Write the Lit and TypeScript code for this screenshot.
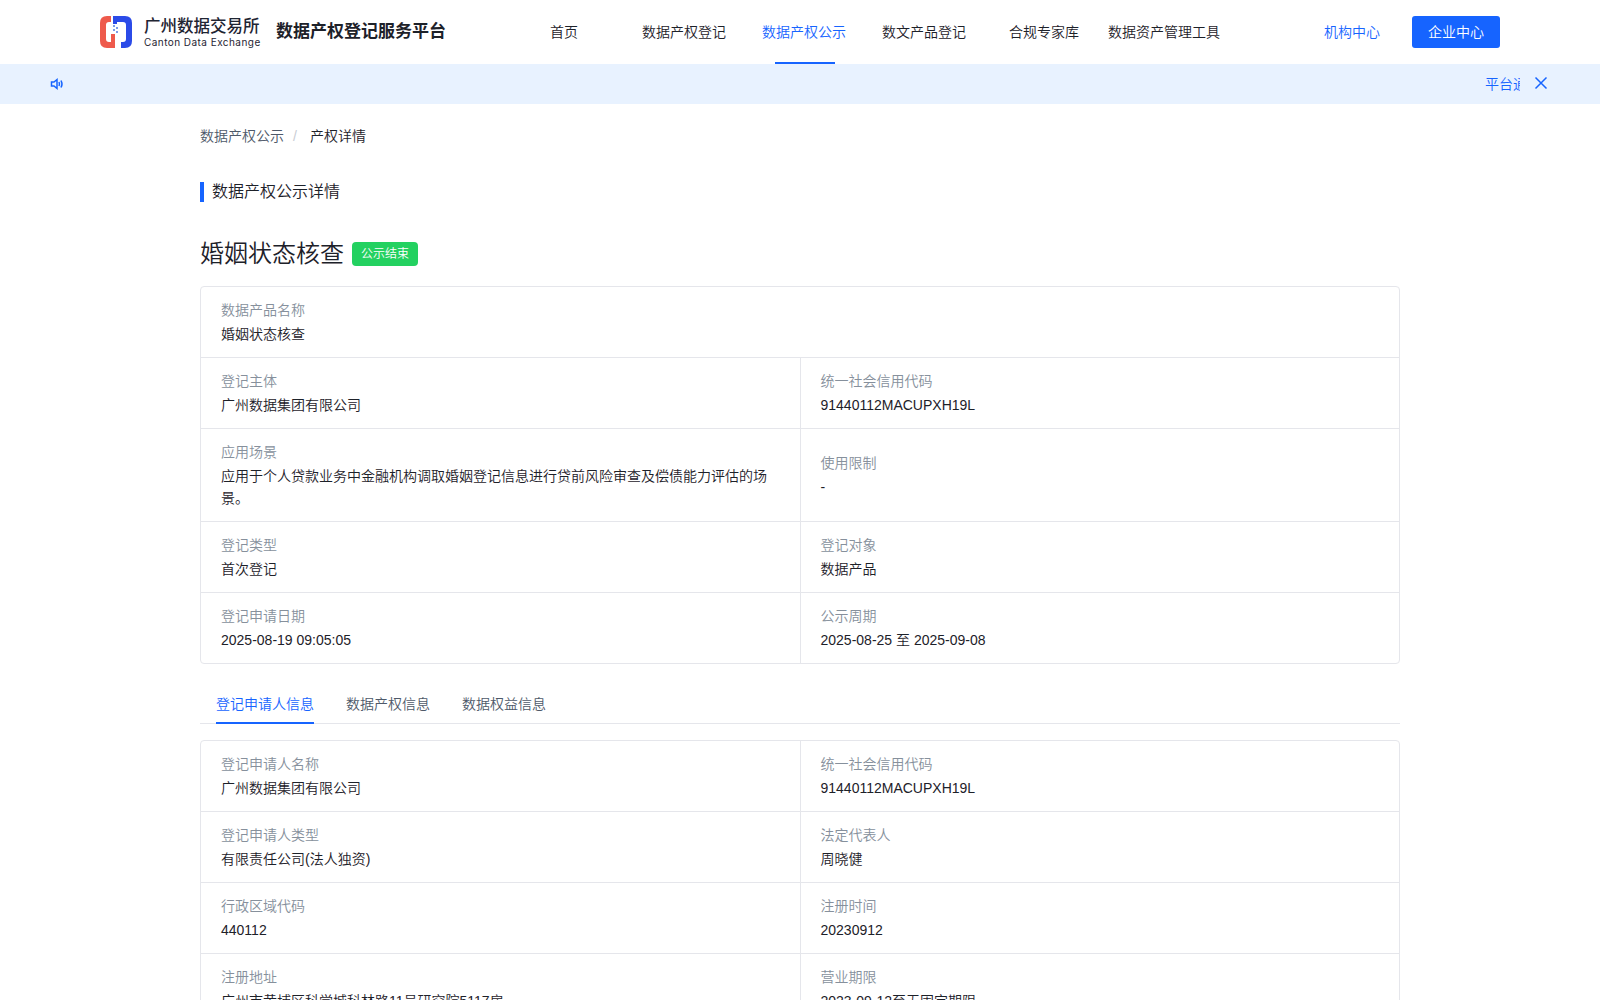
import { LitElement, html, css } from "lit";
import { customElement } from "lit/decorators.js";

const navItems = ["首页", "数据产权登记", "数据产权公示", "数文产品登记", "合规专家库", "数据资产管理工具"];

type Cell = [string, string];
const infoRows: Cell[][] = [
  [["数据产品名称", "婚姻状态核查"]],
  [["登记主体", "广州数据集团有限公司"], ["统一社会信用代码", "91440112MACUPXH19L"]],
  [["应用场景", "应用于个人贷款业务中金融机构调取婚姻登记信息进行贷前风险审查及偿债能力评估的场景。"], ["使用限制", "-"]],
  [["登记类型", "首次登记"], ["登记对象", "数据产品"]],
  [["登记申请日期", "2025-08-19 09:05:05"], ["公示周期", "2025-08-25 至 2025-09-08"]],
];
const applicantRows: Cell[][] = [
  [["登记申请人名称", "广州数据集团有限公司"], ["统一社会信用代码", "91440112MACUPXH19L"]],
  [["登记申请人类型", "有限责任公司(法人独资)"], ["法定代表人", "周晓健"]],
  [["行政区域代码", "440112"], ["注册时间", "20230912"]],
  [["注册地址", "广州市黄埔区科学城科林路11号研究院5117房"], ["营业期限", "2023-09-12至无固定期限"]],
];

@customElement("app-root")
export class AppRoot extends LitElement {
  static styles = css`
    :host {
      display: block;
      height: 1000px;
      overflow: hidden;
      background: #fff;
      color: #1d2129;
      font-family: "Liberation Sans", "Noto Sans CJK SC", sans-serif;
      font-size: 14px;
      line-height: 22px;
      font-weight: 350;
    }
    * { box-sizing: border-box; }
    .header {
      height: 64px;
      display: flex;
      align-items: center;
      padding: 0 100px;
    }
    .brand { display: flex; align-items: center; width: 404px; }
    .logo-mark { width: 32px; height: 32px; flex: none; display: block; }
    .logo-text { margin-left: 12px; width: 116px; padding-top: 2px; display: flex; flex-direction: column; color: #1f2533; }
    .logo-cn { font-size: 16.5px; line-height: 19px; font-weight: 500; white-space: nowrap; }
    .logo-en { font-family: Inter, "Liberation Sans", sans-serif; font-size: 10px; font-weight: 400; line-height: 13px; letter-spacing: 0.45px; white-space: nowrap; }
    .platform { margin-left: 16px; font-size: 17px; font-weight: 700; color: #1d2129; white-space: nowrap; }
    .nav { display: flex; height: 64px; }
    .nav-item {
      position: relative;
      width: 120px;
      display: flex;
      align-items: center;
      justify-content: center;
      white-space: nowrap;
      color: #1d2129;
    }
    .nav-item.active { color: #1664ff; }
    .nav-item.active::after {
      content: "";
      position: absolute;
      left: 31px;
      right: 29px;
      bottom: 0;
      height: 2px;
      background: #1664ff;
    }
    .org { margin-left: 100px; width: 56px; color: #1664ff; white-space: nowrap; }
    .ent {
      margin-left: 32px;
      width: 88px;
      height: 32px;
      background: #1664ff;
      color: #fff;
      border-radius: 3px;
      display: flex;
      align-items: center;
      justify-content: center;
    }
    .notice {
      height: 40px;
      background: #e8f2ff;
      display: flex;
      align-items: center;
      padding: 0 52px 0 50px;
      color: #1664ff;
    }
    .notice svg { display: block; flex: none; }
    .scroll { margin-left: auto; width: 35px; overflow: hidden; white-space: nowrap; margin-right: 14px; }
    .close { margin-bottom: 2px; }
    .main { width: 1200px; margin: 0 auto; }
    .crumbs { display: flex; align-items: center; height: 24px; margin-top: 20px; color: #4e5969; }
    .crumbs .sep { margin: 0 13px 0 9px; color: #c9cdd4; }
    .crumbs .cur { color: #1d2129; }
    .section {
      margin-top: 34px;
      height: 20px;
      border-left: 4px solid #1664ff;
      padding-left: 8px;
      display: flex;
      align-items: center;
      font-size: 16px;
      color: #1d2129;
    }
    .title { margin-top: 36px; height: 32px; display: flex; align-items: center; }
    .title h1 { margin: 0; font-size: 24px; line-height: 32px; font-weight: 350; color: #1d2129; }
    .tag {
      margin-left: 8px;
      height: 24px;
      width: 66px;
      border-radius: 4px;
      background: #23d160;
      color: #fff;
      font-size: 12px;
      display: flex;
      align-items: center;
      justify-content: center;
    }
    .table {
      margin-top: 16px;
      border: 1px solid #e5e6eb;
      border-radius: 4px;
    }
    .row { display: flex; }
    .row + .row { border-top: 1px solid #e5e6eb; }
    .cell {
      flex: 1 1 0;
      min-width: 0;
      padding: 12px 20px;
      display: flex;
      flex-direction: column;
      justify-content: center;
    }
    .cell + .cell { border-left: 1px solid #e5e6eb; }
    .label { color: #86909c; margin-bottom: 2px; }
    .value { color: #1d2129; }
    .tabs {
      margin-top: 24px;
      height: 36px;
      display: flex;
      gap: 32px;
      padding-left: 16px;
      border-bottom: 1px solid #e5e6eb;
    }
    .tab { color: #4e5969; height: 36px; line-height: 32px; white-space: nowrap; }
    .tab.active { color: #1664ff; border-bottom: 2px solid #1664ff; }
  `;

  private table(rows: Cell[][]) {
    return html`<div class="table">
      ${rows.map(
        (r) => html`<div class="row">
          ${r.map(
            ([l, v]) => html`<div class="cell">
              <div class="label">${l}</div>
              <div class="value">${v}</div>
            </div>`
          )}
        </div>`
      )}
    </div>`;
  }

  render() {
    return html`
      <header class="header">
        <div class="brand">
          <svg class="logo-mark" viewBox="0 0 32 32">
            <path d="M7 0H11V6H9Q6 6 6 9V23Q6 26 9 26H11V18H15V32H7Q0 32 0 25V7Q0 0 7 0Z" fill="#ee5a4c"/>
            <path d="M25 32H21V26H23Q26 26 26 23V9Q26 6 23 6H17V8H13V0H25Q32 0 32 7V25Q32 32 25 32Z" fill="#2b4be8"/>
            <g fill="#7c9be8">
              <rect x="13" y="9" width="2" height="2"/><rect x="16" y="11" width="2" height="2"/>
              <rect x="13" y="13" width="2" height="2"/><rect x="16" y="15" width="2" height="2"/>
            </g>
          </svg>
          <div class="logo-text">
            <span class="logo-cn">广州数据交易所</span>
            <span class="logo-en">Canton Data Exchange</span>
          </div>
          <span class="platform">数据产权登记服务平台</span>
        </div>
        <nav class="nav">
          ${navItems.map((n, i) => html`<div class="nav-item ${i === 2 ? "active" : ""}">${n}</div>`)}
        </nav>
        <span class="org">机构中心</span>
        <div class="ent">企业中心</div>
      </header>
      <div class="notice">
        <svg width="14" height="14" viewBox="0 0 14 14" fill="none" stroke="#1664ff" stroke-width="1.5">
          <path d="M1.5 5H4L7 2.5V11.5L4 9H1.5Z"/>
          <path d="M9 5Q10 7 9 9"/>
          <path d="M11 3.5Q13 7 11 10.5"/>
        </svg>
        <div class="scroll">平台通知</div>
        <svg class="close" width="14" height="14" viewBox="0 0 14 14" fill="none" stroke="#1664ff" stroke-width="1.5">
          <path d="M1.5 1.5L12.5 12.5M12.5 1.5L1.5 12.5"/>
        </svg>
      </div>
      <main class="main">
        <div class="crumbs">
          <span>数据产权公示</span><span class="sep">/</span><span class="cur">产权详情</span>
        </div>
        <div class="section">数据产权公示详情</div>
        <div class="title"><h1>婚姻状态核查</h1><span class="tag">公示结束</span></div>
        ${this.table(infoRows)}
        <div class="tabs">
          <div class="tab active">登记申请人信息</div>
          <div class="tab">数据产权信息</div>
          <div class="tab">数据权益信息</div>
        </div>
        ${this.table(applicantRows)}
      </main>
    `;
  }
}
